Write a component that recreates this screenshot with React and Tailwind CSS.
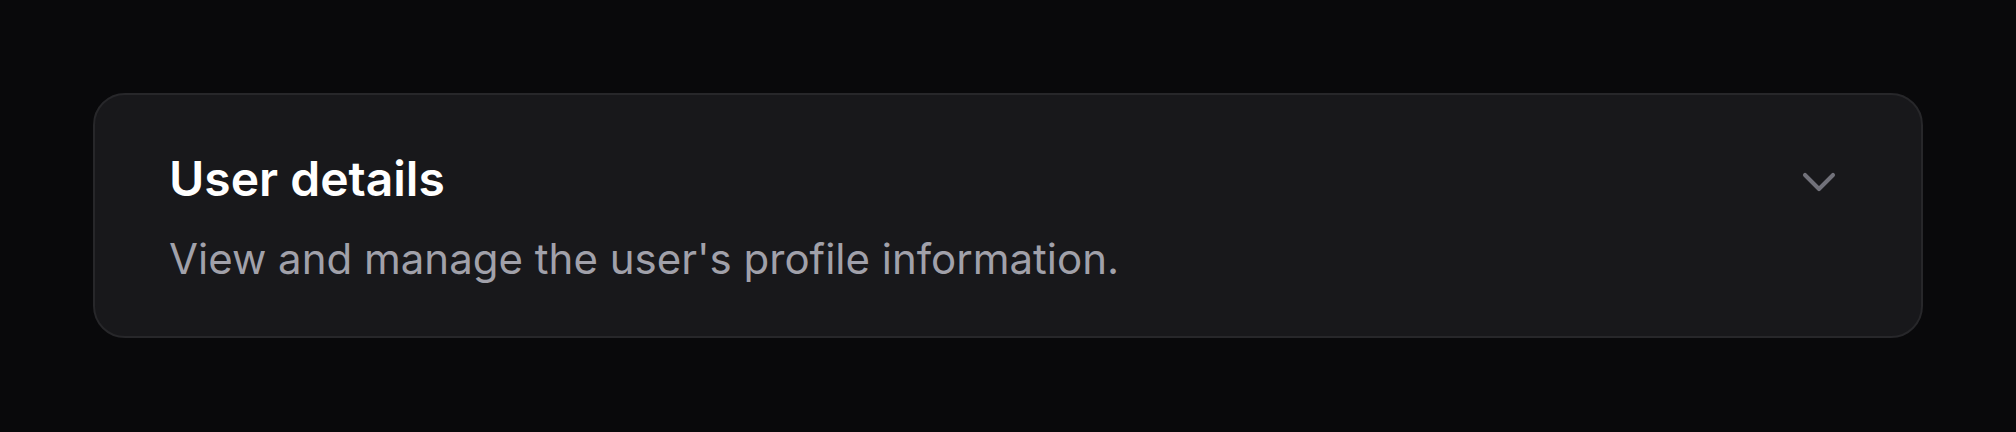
import React from 'react'
import { ChevronDown } from 'lucide-react'

const App = () => {
  return (
    <div className="min-h-[432px] w-full bg-[#09090b] p-[93px] font-['Inter',sans-serif]">
      <div className="rounded-[32px] border-2 border-[#27272a] bg-[#18181b] px-[74px] pt-[52px] pb-[47px]">
        <div className="flex items-start justify-between">
          <div>
            <h2 className="text-[48px] font-semibold leading-[64px] text-white">User details</h2>
            <p className="mt-[18px] text-[42px] leading-[60px] text-[#a1a1aa]">
              View and manage the user's profile information.
            </p>
          </div>
          <ChevronDown size={56} strokeWidth={1.75} className="mt-[7px] text-[#71717a]" />
        </div>
      </div>
    </div>
  )
}

export default App
